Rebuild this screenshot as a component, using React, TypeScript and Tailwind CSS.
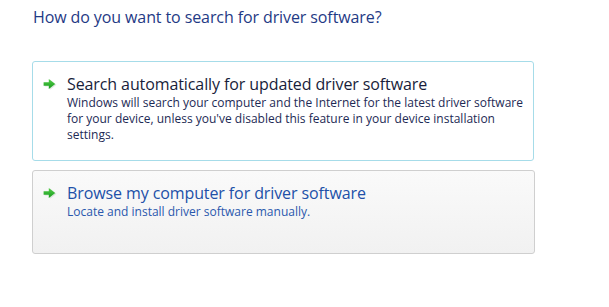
function Arrow() {
  return (
    <svg width="14" height="12" viewBox="0 0 14 12" className="shrink-0">
      <defs>
        <linearGradient id="ag" x1="0" y1="0" x2="0" y2="1">
          <stop offset="0" stopColor="#56cf4a" />
          <stop offset="1" stopColor="#159a1c" />
        </linearGradient>
      </defs>
      <path d="M1.2 4.3 H6.4 V0.9 L12.8 6 L6.4 11.1 V7.7 H1.2 Z" fill="#b9cbb9" opacity="0.45" transform="translate(0.6 0.7)" />
      <path d="M0.6 4.3 H5.8 V0.9 L12.2 6 L5.8 11.1 V7.7 H0.6 Z" fill="url(#ag)" />
    </svg>
  );
}

function CommandLink({
  title,
  lines,
  active,
}: {
  title: string;
  lines: string[];
  active?: boolean;
}) {
  return (
    <div
      className={
        active
          ? "w-[502px] h-[100px] rounded-[3px] border border-[#a6dce9] bg-white pt-[11px]"
          : "w-[503px] h-[84px] rounded-[3px] border border-[#cfcfcf] bg-gradient-to-b from-[#fafafa] to-[#f1f1f1] pt-[11px]"
      }
    >
      <div className="flex">
        <div className="w-[34px] flex justify-end pr-[10px] pt-[5px]">
          <Arrow />
        </div>
        <div>
          <div
            className={
              active
                ? "text-[16px] leading-[22px] tracking-[-0.1px] text-[#181d3a]"
                : "text-[16px] leading-[22px] tracking-[-0.1px] text-[#2150a8]"
            }
          >
            {title}
          </div>
          <div
            className={
              active
                ? "text-[12px] leading-[16px] tracking-[0px] text-[#1d2a55]"
                : "text-[12px] leading-[16px] tracking-[0px] text-[#2a58ad]"
            }
          >
            {lines.map((l) => (
              <div key={l}>{l}</div>
            ))}
          </div>
        </div>
      </div>
    </div>
  );
}

export default function App() {
  return (
    <main
      className="w-[609px] h-[307px] bg-white pl-[32px] pt-[6px]"
      style={{ fontFamily: '"Open Sans", "Noto Sans", sans-serif' }}
    >
      <h1 className="pl-[1px] text-[16px] leading-[22px] tracking-[-0.1px] text-[#1f3a85]">
        How do you want to search for driver software?
      </h1>
      <div className="mt-[33px] flex flex-col gap-[9px]">
        <CommandLink
          active
          title="Search automatically for updated driver software"
          lines={[
            "Windows will search your computer and the Internet for the latest driver software",
            "for your device, unless you've disabled this feature in your device installation",
            "settings.",
          ]}
        />
        <CommandLink
          title="Browse my computer for driver software"
          lines={["Locate and install driver software manually."]}
        />
      </div>
    </main>
  );
}
